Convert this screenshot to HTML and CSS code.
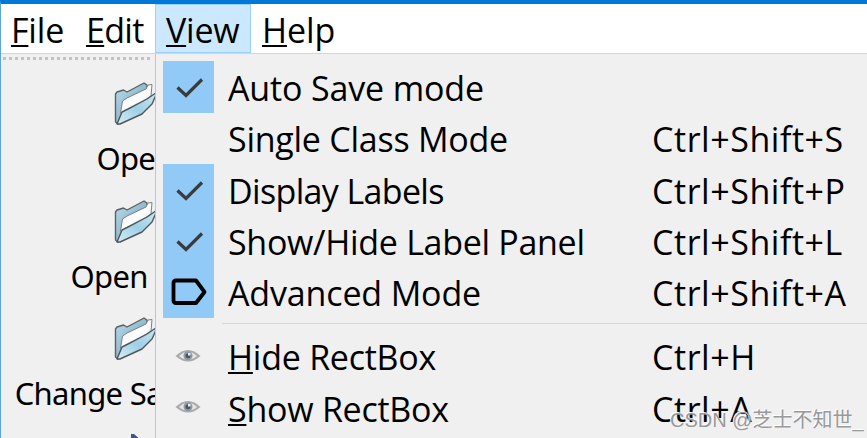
FILE: index.html
```html
<!DOCTYPE html>
<html>
<head>
 <meta charset="utf-8">
 <title>View menu</title>
 <link rel="stylesheet" href="styles.css">
</head>
<body>
 <svg class="defs">
 <defs>
 <linearGradient id="back" x1="0" y1="0" x2="1" y2="1">
 <stop offset="0" stop-color="#b9dceb"/>
 <stop offset="0.5" stop-color="#93bccf"/>
 <stop offset="1" stop-color="#7ba6ba"/>
 </linearGradient>
 <linearGradient id="front" x1="0" y1="1" x2="1" y2="0">
 <stop offset="0" stop-color="#d4edf7"/>
 <stop offset="0.5" stop-color="#9fd0e6"/>
 <stop offset="1" stop-color="#c8e6f3"/>
 </linearGradient>
 <linearGradient id="paper" x1="0" y1="0" x2="1" y2="1">
 <stop offset="0" stop-color="#dedede"/>
 <stop offset="0.5" stop-color="#ffffff"/>
 <stop offset="1" stop-color="#dddddd"/>
 </linearGradient>
 <symbol id="folder" viewBox="0 0 48 48">
 <path d="M2.500 14 L4 12 L10.500 10 L14 12 L31 3 L34 5 L34 12 L8 41 L5 44 L2.500 42 Z" fill="url(#back)" stroke="#5a6165" stroke-width="1.4" stroke-linejoin="round"/>
 <path d="M7.500 33 L9.500 21 L14 18 L33 9 L35 5 L39 4.500 L38 16 L20 28 Z" fill="url(#paper)" stroke="#7c8083" stroke-width="1" stroke-linejoin="round"/>
 <path d="M4 44 L9 32 L15 29 L34 19 L42 13.500 L43 15 L39 24 L29 34 L7 44 Z" fill="url(#front)" stroke="#50575b" stroke-width="1.4" stroke-linejoin="round"/>
 </symbol>
 <symbol id="check" viewBox="0 0 28 22">
 <path d="M1.500 10.500 L10 18.500 L26 2.500" fill="none" stroke="#3b3b3b" stroke-width="3.2"/>
 </symbol>
 <symbol id="eye" viewBox="0 0 26 14">
 <path d="M0.500 7 Q13 -5 25.500 7 Q13 18 0.500 7 Z" fill="#aaaaaa"/>
 <path d="M4 7 Q13 -1.500 22 7 Q13 14.500 4 7 Z" fill="#e4e6e8"/>
 <circle cx="13" cy="6.800" r="4.500" fill="#8c9aa8"/>
 <circle cx="13" cy="6.800" r="2.500" fill="#4a5763"/>
 <rect x="13" y="4" width="2.500" height="2.500" fill="#e8eef4"/>
 </symbol>
 </defs>
 </svg>
 <div class="window">
 <div class="menubar">
 <div class="menu file"><u>F</u>ile</div>
 <div class="menu edit"><u>E</u>dit</div>
 <div class="menu view"><u>V</u>iew</div>
 <div class="menu help"><u>H</u>elp</div>
 </div>
 <div class="handle"></div>
 <div class="toolbar">
 <div class="tool"><svg class="folder"><use href="#folder"/></svg><span>Open</span></div>
 <div class="tool"><svg class="folder"><use href="#folder"/></svg><span class="dir">Open Dir</span></div>
 <div class="tool"><svg class="folder"><use href="#folder"/></svg><span class="save">Change Save Dir</span></div>
 <div class="tool"><svg class="arrow" viewBox="0 0 12 12"><path d="M0 0 L3 0 L12 8 L12 12 L0 12 Z" fill="#3c5580"/></svg></div>
 </div>
 </div>
 <div class="dropdown">
 <div class="item"><div class="mark on"><svg class="check"><use href="#check"/></svg></div><span class="name auto">Auto Save mode</span></div>
 <div class="item"><div class="mark"></div><span class="name single">Single Class Mode</span><span class="key">Ctrl+Shift+S</span></div>
 <div class="item"><div class="mark on"><svg class="check"><use href="#check"/></svg></div><span class="name display">Display Labels</span><span class="key">Ctrl+Shift+P</span></div>
 <div class="item"><div class="mark on"><svg class="check"><use href="#check"/></svg></div><span class="name panel">Show/Hide Label Panel</span><span class="key">Ctrl+Shift+L</span></div>
 <div class="item"><div class="mark on"><svg class="tag" viewBox="0 0 36 28"><path d="M5 2.500 H25 L33.500 14 L25 25 H5 Q2.500 25 2.500 22.500 V5 Q2.500 2.500 5 2.500 Z" fill="none" stroke="#000" stroke-width="3.800" stroke-linejoin="round"/></svg></div><span class="name advanced">Advanced Mode</span><span class="key">Ctrl+Shift+A</span></div>
 <div class="separator"></div>
 <div class="item"><div class="mark"><svg class="eye"><use href="#eye"/></svg></div><span class="name hide"><u>H</u>ide RectBox</span><span class="key">Ctrl+H</span></div>
 <div class="item"><div class="mark"><svg class="eye"><use href="#eye"/></svg></div><span class="name show"><u>S</u>how RectBox</span><span class="key">Ctrl+A</span></div>
 </div>
 <div class="watermark">CSDN @芝士不知世_</div>
</body>
</html>
```
FILE: styles.css
```css
body {
 margin: 0;
 width: 867px;
 height: 438px;
 overflow: hidden;
 position: relative;
 background-color: #f0f0f0;
 font-family: "Open Sans", "Noto Sans", sans-serif;
 font-size: 34px;
 color: #000;
}
.defs {
 position: absolute;
 width: 0;
 height: 0;
}
u {
 text-decoration-thickness: 2px;
 text-underline-offset: 2px;
 text-decoration-skip-ink: none;
}
.window {
 box-sizing: border-box;
 height: 438px;
 border-top: 4px solid #0078d7;
 border-left: 1px solid #5ba5e0;
 overflow: hidden;
}
/* Barre de menus */
.menubar {
 display: flex;
 height: 49px;
 background-color: #fff;
 border-bottom: 1px solid #d5d5d5;
}
.menu {
 box-sizing: border-box;
 height: 49px;
 line-height: 53px;
 padding-left: 10px;
 letter-spacing: -0.2px;
 white-space: nowrap;
}
.file {
 width: 75px;
}
.edit {
 width: 79px;
 letter-spacing: -0.7px;
}
.view {
 width: 96px;
 line-height: 51px;
 border: 1px solid #99d1ff;
 background-color: #cce8ff;
}
.help {
 padding-left: 11px;
 letter-spacing: -0.1px;
}
/* Barre d'outils */
.handle {
 width: 150px;
 height: 3px;
 margin: 3px 0 0 2px;
 background: repeating-linear-gradient(90deg, #c3c3c3 0, #c3c3c3 3px, #f0f0f0 3px, #f0f0f0 6px);
}
.toolbar {
 width: 268px;
 padding-top: 19px;
}
.tool {
 height: 117.500px;
 display: flex;
 flex-direction: column;
 align-items: center;
 font-family: "Noto Sans", sans-serif;
 font-size: 31px;
 line-height: 42px;
 letter-spacing: -0.7px;
 white-space: nowrap;
}
.folder {
 width: 48px;
 height: 48px;
 margin: 1px 0 9px 3px;
}
.dir {
 margin-right: 3px;
}
.save {
 margin-right: 12px;
}
.arrow {
 width: 12px;
 height: 12px;
 margin: 2px 0 0 4px;
}
/* Menu ouvert */
.dropdown {
 position: absolute;
 box-sizing: border-box;
 left: 155px;
 top: 54px;
 width: 712px;
 height: 384px;
 padding: 7px 0 0 7px;
 border-left: 1px solid #c4c4c4;
 background-color: #f0f0f0;
 overflow: hidden;
}
.item {
 display: flex;
 height: 51.3px;
 line-height: 55px;
 white-space: nowrap;
}
.mark {
 width: 51px;
 height: 51.5px;
 display: flex;
 align-items: center;
 justify-content: center;
}
.on {
 background-color: #91c9f7;
}
.name {
 width: 424px;
 margin-left: 14px;
}
.auto, .advanced {
 letter-spacing: -0.15px;
}
.single, .hide, .show {
 letter-spacing: -0.25px;
}
.display {
 letter-spacing: -0.65px;
}
.panel {
 letter-spacing: -0.3px;
}
.key {
 letter-spacing: 0.55px;
}
.separator {
 height: 1px;
 margin: 6px 0 6px 59px;
 background-color: #d7d7d7;
}
.check {
 width: 28px;
 height: 22px;
 margin: 3px 0 0 2px;
}
.tag {
 width: 36px;
 height: 28px;
}
.eye {
 width: 26px;
 height: 14px;
 margin-right: 2px;
 margin-bottom: 1px;
}
.watermark {
 position: absolute;
 left: 670px;
 top: 406px;
 font-family: "Liberation Sans", "Noto Sans CJK SC", sans-serif;
 font-size: 20px;
 line-height: 28px;
 color: #999;
 white-space: nowrap;
 text-shadow: -1px -1px 0 #fff;
}
```
